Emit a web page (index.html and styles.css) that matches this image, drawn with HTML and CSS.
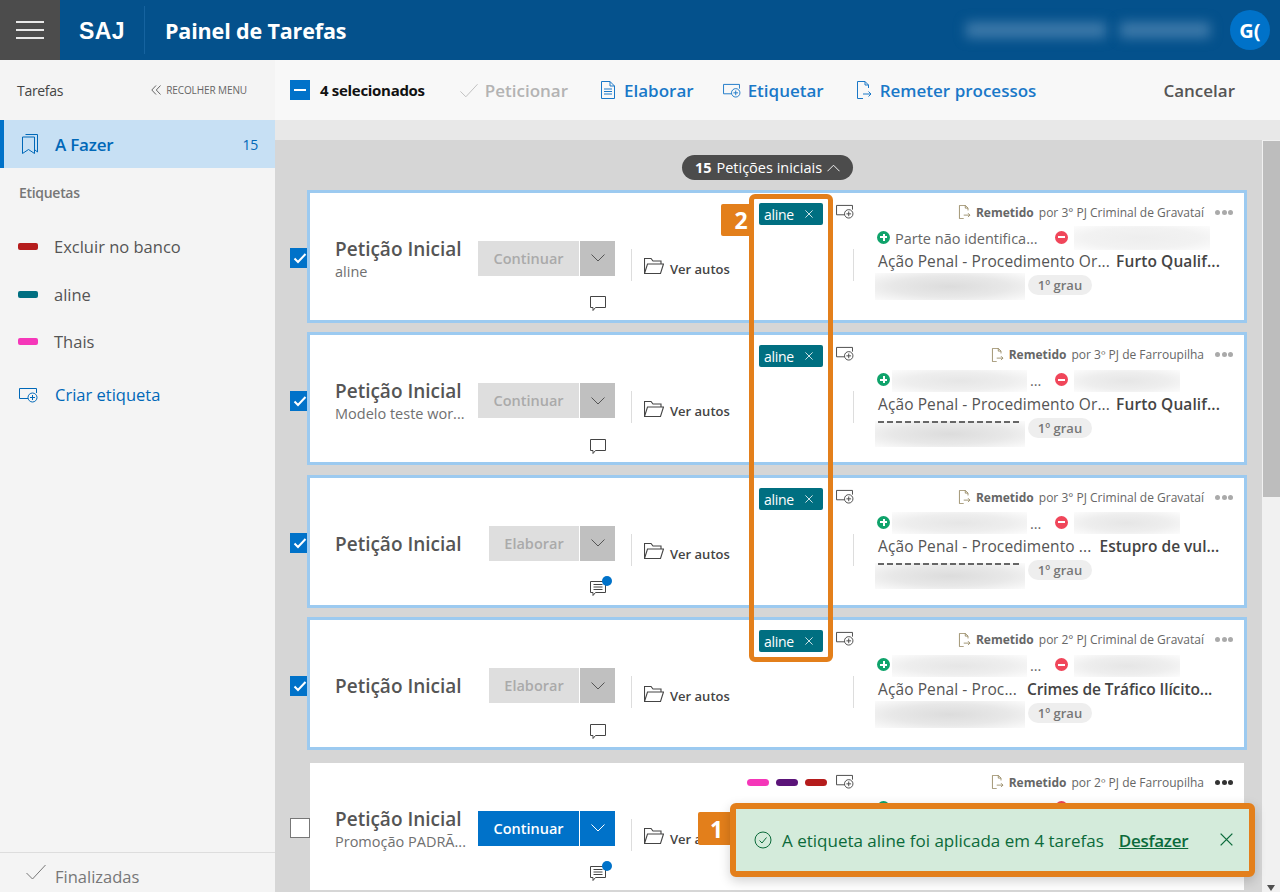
FILE: index.html
```html
<!DOCTYPE html>
<html lang="pt-BR">
<head>
<meta charset="utf-8">
<title>Painel de Tarefas</title>
<link rel="stylesheet" href="styles.css">
</head>
<body>
<svg class="defs" aria-hidden="true">
  <symbol id="i-label" viewBox="0 0 20 16"><path d="M10 11.500H1.500V1.500H18.500V6" fill="none" stroke="currentColor"/><circle cx="14.500" cy="10.500" r="4.500" fill="none" stroke="currentColor"/><path d="M14.500 8v5M12 10.500h5" stroke="currentColor"/></symbol>
  <symbol id="i-remit" viewBox="0 0 16 18"><path d="M9 .5H1.500V17.500H7M9 .5V4H12.500M9 .5L12.500 4V7" fill="none" stroke="currentColor"/><path d="M7 13H15M12.500 10.500L15 13L12.500 15.500" fill="none" stroke="currentColor"/></symbol>
  <symbol id="i-chat" viewBox="0 0 16 16"><path d="M.5 .5H15.500V11.500H5.500L3 14.500V11.500H.5Z" fill="none" stroke="currentColor"/></symbol>
  <symbol id="i-chatn" viewBox="0 0 16 16"><path d="M.5 .5H15.500V11.500H5.500L3 14.500V11.500H.5Z" fill="none" stroke="currentColor"/><path d="M3.500 3.500H12.500M3.500 6H12.500M3.500 8.500H12.500" stroke="currentColor"/></symbol>
  <symbol id="i-folder" viewBox="0 0 20 16"><path d="M.5 15.500V.5H7L9 3H17V6M.5 15.500H16.500L19.500 6H3.500L.5 15.500Z" fill="none" stroke="currentColor" stroke-width="1.100"/></symbol>
  <symbol id="i-down" viewBox="0 0 14 8"><path d="M.5 .5L7 7L13.500 .5" fill="none" stroke="currentColor"/></symbol>
  <symbol id="i-check" viewBox="0 0 20 16"><path d="M.5 9L6.500 15L19.500 1" fill="none" stroke="currentColor"/></symbol>
  <symbol id="i-tick" viewBox="0 0 14 12"><path d="M1.500 6.500L5 10L12.500 2" fill="none" stroke="currentColor" stroke-width="2"/></symbol>
  <symbol id="i-x" viewBox="0 0 10 10"><path d="M.5 .5L9.500 9.500M9.500 .5L.5 9.500" stroke="currentColor"/></symbol>
</svg>
<header class="topbar">
  <button class="burger" aria-label="Menu"><span></span><span></span><span></span></button>
  <span class="brand">SAJ</span>
  <span class="apptitle">Painel de Tarefas</span>
  <div class="userinfo"><span class="blurlight b1"></span><span class="blurlight b2"></span></div>
  <span class="avatar">G(</span>
</header>
<div class="shell">
  <aside class="sidebar">
    <div class="sidehead"><span>Tarefas</span><span class="collapse"><svg class="dbl" viewBox="0 0 10 10"><path d="M5 .5L.8 5L5 9.500M9.500 .5L5.300 5L9.500 9.500" fill="none" stroke="currentColor"/></svg>RECOLHER MENU</span></div>
    <div class="active-item">
      <svg class="bookmark" viewBox="0 0 16 20"><path d="M3.500 .5H15.500V18L13 16M.5 3H12.500V19.500L6.500 15.500L.5 19.500Z" fill="none" stroke="currentColor"/></svg>
      <span class="active-name">A Fazer</span><span class="count">15</span>
    </div>
    <div class="sidesection">Etiquetas</div>
    <ul class="labels">
      <li><i class="sw red"></i>Excluir no banco</li>
      <li><i class="sw teal"></i>aline</li>
      <li><i class="sw pink"></i>Thais</li>
    </ul>
    <div class="create"><svg class="ic-create"><use href="#i-label"/></svg>Criar etiqueta</div>
    <div class="finished"><svg class="ic-fin"><use href="#i-check"/></svg>Finalizadas</div>
  </aside>
  <main class="main">
    <div class="toolbar">
      <span class="cb cb-mixed"><i></i></span>
      <span class="selcount">4 selecionados</span>
      <span class="tool t-pet off"><svg class="ic-t18"><use href="#i-check"/></svg>Peticionar</span>
      <span class="tool t-ela"><svg class="ic-doc" viewBox="0 0 14 18"><path d="M9 .5H.5V17.500H13.500V5ZM9 .5V5H13.500M3 8H11M3 10.500H11M3 13H11" fill="none" stroke="currentColor"/></svg>Elaborar</span>
      <span class="tool t-eti"><svg class="ic-tl"><use href="#i-label"/></svg>Etiquetar</span>
      <span class="tool"><svg class="ic-tr"><use href="#i-remit"/></svg>Remeter processos</span>
      <span class="tool cancel">Cancelar</span>
    </div>
    <div class="strip"></div>
    <div class="content">
      <div class="list">
        <div class="groupwrap"><span class="group"><b>15</b> Petições iniciais <svg class="ic-up" viewBox="0 0 14 8"><path d="M.5 7.500L7 1L13.500 7.500" fill="none" stroke="currentColor"/></svg></span></div>

        <div class="row">
          <span class="cb cb-on"><svg><use href="#i-tick"/></svg></span>
          <article class="card sel">
            <div class="left">
              <div class="lead"><div class="info"><div class="t">Petição Inicial</div><div class="s">aline</div></div>
                <div class="split off"><span class="go">Continuar</span><span class="car"><svg><use href="#i-down"/></svg></span></div></div>
              <div class="note"><svg class="ic-chat"><use href="#i-chat"/></svg></div>
            </div>
            <div class="vr"></div>
            <div class="autos"><svg class="ic-folder"><use href="#i-folder"/></svg>Ver autos</div>
            <div class="tags"><span class="tag">aline <svg><use href="#i-x"/></svg></span></div>
            <svg class="ic-add"><use href="#i-label"/></svg>
            <div class="vr vr2"></div>
            <div class="detail">
              <div class="rem"><svg class="ic-rem"><use href="#i-remit"/></svg><b>Remetido</b> por 3° PJ Criminal de Gravataí<span class="dots"><i></i><i></i><i></i></span></div>
              <div class="party"><i class="plus"></i><span class="pname">Parte não identifica...</span><i class="minus"></i><span class="bl bl-a"></span></div>
              <div class="act">Ação Penal - Procedimento Or... <b>Furto Qualif...</b></div>
              <div class="proc"><span class="bl-p"></span><span class="grau">1º grau</span></div>
            </div>
          </article>
        </div>

        <div class="row">
          <span class="cb cb-on"><svg><use href="#i-tick"/></svg></span>
          <article class="card sel">
            <div class="left">
              <div class="lead"><div class="info"><div class="t">Petição Inicial</div><div class="s">Modelo teste wor...</div></div>
                <div class="split off"><span class="go">Continuar</span><span class="car"><svg><use href="#i-down"/></svg></span></div></div>
              <div class="note"><svg class="ic-chat"><use href="#i-chat"/></svg></div>
            </div>
            <div class="vr"></div>
            <div class="autos"><svg class="ic-folder"><use href="#i-folder"/></svg>Ver autos</div>
            <div class="tags"><span class="tag">aline <svg><use href="#i-x"/></svg></span></div>
            <svg class="ic-add"><use href="#i-label"/></svg>
            <div class="vr vr2"></div>
            <div class="detail">
              <div class="rem"><svg class="ic-rem"><use href="#i-remit"/></svg><b>Remetido</b> por 3º PJ de Farroupilha<span class="dots"><i></i><i></i><i></i></span></div>
              <div class="party"><i class="plus"></i><span class="pname"><span class="bl bl-n"></span>...</span><i class="minus"></i><span class="bl bl-b"></span></div>
              <div class="act">Ação Penal - Procedimento Or... <b>Furto Qualif...</b></div>
              <div class="proc"><span class="bl-p peek"></span><span class="grau">1º grau</span></div>
            </div>
          </article>
        </div>

        <div class="row">
          <span class="cb cb-on"><svg><use href="#i-tick"/></svg></span>
          <article class="card sel">
            <div class="left">
              <div class="lead"><div class="info"><div class="t">Petição Inicial</div></div>
                <div class="split off"><span class="go go-e">Elaborar</span><span class="car"><svg><use href="#i-down"/></svg></span></div></div>
              <div class="note"><svg class="ic-chat"><use href="#i-chatn"/></svg><i class="ping"></i></div>
            </div>
            <div class="vr"></div>
            <div class="autos"><svg class="ic-folder"><use href="#i-folder"/></svg>Ver autos</div>
            <div class="tags"><span class="tag">aline <svg><use href="#i-x"/></svg></span></div>
            <svg class="ic-add"><use href="#i-label"/></svg>
            <div class="vr vr2"></div>
            <div class="detail">
              <div class="rem"><svg class="ic-rem"><use href="#i-remit"/></svg><b>Remetido</b> por 3° PJ Criminal de Gravataí<span class="dots"><i></i><i></i><i></i></span></div>
              <div class="party"><i class="plus"></i><span class="pname"><span class="bl bl-n"></span>...</span><i class="minus"></i><span class="bl bl-b"></span></div>
              <div class="act">Ação Penal - Procedimento ... <b class="wide">Estupro de vul...</b></div>
              <div class="proc"><span class="bl-p peek"></span><span class="grau">1º grau</span></div>
            </div>
          </article>
        </div>

        <div class="row">
          <span class="cb cb-on"><svg><use href="#i-tick"/></svg></span>
          <article class="card sel">
            <div class="left">
              <div class="lead"><div class="info"><div class="t">Petição Inicial</div></div>
                <div class="split off"><span class="go go-e">Elaborar</span><span class="car"><svg><use href="#i-down"/></svg></span></div></div>
              <div class="note"><svg class="ic-chat"><use href="#i-chat"/></svg></div>
            </div>
            <div class="vr"></div>
            <div class="autos"><svg class="ic-folder"><use href="#i-folder"/></svg>Ver autos</div>
            <div class="tags"><span class="tag">aline <svg><use href="#i-x"/></svg></span></div>
            <svg class="ic-add"><use href="#i-label"/></svg>
            <div class="vr vr2"></div>
            <div class="detail">
              <div class="rem"><svg class="ic-rem"><use href="#i-remit"/></svg><b>Remetido</b> por 2° PJ Criminal de Gravataí<span class="dots"><i></i><i></i><i></i></span></div>
              <div class="party"><i class="plus"></i><span class="pname"><span class="bl bl-n"></span>...</span><i class="minus"></i><span class="bl bl-b"></span></div>
              <div class="act">Ação Penal - Proc... <b class="wider">Crimes de Tráfico Ilícito...</b></div>
              <div class="proc"><span class="bl-p"></span><span class="grau">1º grau</span></div>
            </div>
          </article>
        </div>

        <div class="row">
          <span class="cb"></span>
          <article class="card">
            <div class="left">
              <div class="lead"><div class="info"><div class="t">Petição Inicial</div><div class="s">Promoção PADRÃ...</div></div>
                <div class="split"><span class="go">Continuar</span><span class="car"><svg><use href="#i-down"/></svg></span></div></div>
              <div class="note"><svg class="ic-chat"><use href="#i-chatn"/></svg><i class="ping"></i></div>
            </div>
            <div class="vr"></div>
            <div class="autos"><svg class="ic-folder"><use href="#i-folder"/></svg>Ver autos</div>
            <div class="tags tags-mini"><i class="mini pink"></i><i class="mini purple"></i><i class="mini red"></i></div>
            <svg class="ic-add"><use href="#i-label"/></svg>
            <div class="vr vr2"></div>
            <div class="detail">
              <div class="rem"><svg class="ic-rem"><use href="#i-remit"/></svg><b>Remetido</b> por 2º PJ de Farroupilha<span class="dots dark"><i></i><i></i><i></i></span></div>
              <div class="party"><i class="plus"></i><span class="pname">Parte não identifica...</span><i class="minus"></i><span class="pname">333.510.151-00</span></div>
            </div>
          </article>
        </div>
      </div>
      <div class="scrollbar"><i class="arr up"></i><div class="thumb"></div><i class="arr dn"></i></div>
    </div>
  </main>
</div>

<div class="badge badge2">2</div>
<div class="frame"></div>
<div class="badge badge1">1</div>
<div class="toast">
  <svg class="ic-ok" viewBox="0 0 18 18"><circle cx="9" cy="9" r="8" fill="none" stroke="currentColor"/><path d="M5.500 9.500L8 12L12.500 6.500" fill="none" stroke="currentColor"/></svg>
  <span class="msg">A etiqueta aline foi aplicada em 4 tarefas</span>
  <a class="undo">Desfazer</a>
  <svg class="ic-close"><use href="#i-x"/></svg>
</div>
</body>
</html>
```
FILE: styles.css
```css
* { box-sizing: border-box; }
html, body { margin: 0; height: 892px; overflow: hidden; }
body { font-family: "Open Sans", "Noto Sans", "Liberation Sans", sans-serif; color: #555; display: flex; flex-direction: column; position: relative; }
.defs { display: none; }
svg { display: block; flex: none; }

.topbar { height: 60px; flex: none; background: #04518c; display: flex; align-items: center; color: #fff; }
.burger { width: 60px; height: 60px; background: #4c4c4c; border: 0; padding: 0; display: flex; flex-direction: column; align-items: center; justify-content: center; gap: 6px; }
.burger span { width: 28px; height: 2px; background: #e8e8e8; }
.brand { font-family: "Liberation Sans", sans-serif; font-size: 23px; font-weight: 700; margin-left: 19px; width: 66px; height: 48px; line-height: 50px; border-right: 1px solid #16639f; letter-spacing: .4px; }
.apptitle { font-size: 21.500px; font-weight: 700; margin-left: 20px; letter-spacing: -.15px; }
.userinfo { margin-left: auto; display: flex; gap: 14px; margin-right: 20px; }
.blurlight { height: 16px; background: #3d79a9; filter: blur(6px); display: block; }
.b1 { width: 140px; }
.b2 { width: 90px; }
.avatar { width: 40px; height: 40px; border-radius: 50%; background: #0072c9; font-size: 20px; font-weight: 700; display: flex; align-items: center; justify-content: center; margin-right: 10px; }

.shell { flex: 1; display: flex; min-height: 0; }
.sidebar { width: 275px; flex: none; background: #f4f4f4; display: flex; flex-direction: column; color: #666; }
.sidehead { height: 60px; display: flex; align-items: center; justify-content: space-between; padding: 0 28px 0 17px; font-size: 14px; color: #444; letter-spacing: -.3px; }
.collapse { display: flex; align-items: center; font-size: 10px; color: #666; letter-spacing: -.1px; }
.dbl { width: 10px; height: 10px; margin-right: 5px; }
.active-item { height: 48px; background: #c7e0f4; border-left: 4px solid #0072c9; display: flex; align-items: center; color: #0068b8; }
.bookmark { width: 16px; height: 20px; margin-left: 18px; }
.active-name { font-size: 17px; font-weight: 600; margin-left: 17px; letter-spacing: -.2px; }
.count { margin-left: auto; margin-right: 17px; font-size: 14px; letter-spacing: -.3px; }
.sidesection { font-size: 14px; font-weight: 600; color: #777; margin: 15px 0 0 19px; line-height: 20px; letter-spacing: -.3px; }
.labels { list-style: none; margin: 20px 0 0; padding: 0; }
.labels li { height: 47.500px; display: flex; align-items: center; font-size: 16.500px; color: #555; padding-left: 18px; }
.sw { width: 20px; height: 7px; border-radius: 2px; margin-right: 16px; }
.red { background: #b51c1c; }
.teal { background: #006f81; }
.pink { background: #f537b9; }
.purple { background: #5b1479; }
.create { display: flex; align-items: center; font-size: 16.500px; color: #0068b8; margin-left: 18px; margin-top: 5px; height: 48px; }
.ic-create { width: 20px; height: 16px; margin-right: 17px; }
.finished { margin-top: auto; border-top: 1px solid #ddd; height: 40px; display: flex; align-items: center; padding: 8px 0 0 26px; font-size: 16.500px; color: #777; }
.ic-fin { width: 20px; height: 16px; margin-right: 9px; margin-top: -10px; }

.main { flex: 1; min-width: 0; display: flex; flex-direction: column; background: #d6d6d6; }
.toolbar { height: 60px; flex: none; background: #f8f8f8; display: flex; align-items: center; padding-left: 15px; padding-right: 45px; font-size: 17px; font-weight: 600; color: #1a78c8; }
.selcount { font-size: 15px; font-weight: 700; color: #111; margin: 0 35px 0 10px; letter-spacing: -.3px; }
.tool { display: flex; align-items: center; margin-right: 31px; }
.t-pet { margin-right: 33px; }
.t-ela { margin-right: 28px; }
.t-eti { margin-right: 32px; }
.off { color: #b3b3b3; }
.cancel { margin-left: auto; margin-right: 0; color: #555; }
.ic-t18 { width: 18px; height: 15px; margin-right: 7px; color: #bbb; }
.ic-doc { width: 14px; height: 18px; margin-right: 9px; }
.ic-tl { width: 19px; height: 15px; margin-right: 7px; }
.ic-tr { width: 16px; height: 18px; margin-right: 8px; }
.strip { height: 20px; flex: none; background: #e8e8e8; }

.content { flex: 1; min-height: 0; display: flex; overflow: hidden; }
.list { flex: 1; min-width: 0; padding: 15px 15px 0; display: flex; flex-direction: column; gap: 9.500px; }
.groupwrap { height: 25px; display: flex; justify-content: center; margin-bottom: .400px; }
.group { height: 25px; border-radius: 13px; background: #4c4c4c; color: #fff; font-size: 14.500px; display: flex; align-items: center; gap: 5px; padding: 0 13px 0 13px; transform: translateX(-1px); }
.group b { font-weight: 700; }
.ic-up { width: 13px; height: 8px; }
.scrollbar { width: 18px; flex: none; background: #f1f1f1; display: flex; flex-direction: column; align-items: center; position: relative; margin-top: -20px; padding-top: 21px; }
.thumb { width: 17px; height: 356px; background: #bdbdbd; }
.arr { position: absolute; width: 0; height: 0; border-left: 4.500px solid transparent; border-right: 4.500px solid transparent; }
.arr.up { top: 9px; border-bottom: 6px solid #a3a3a3; }
.arr.dn { bottom: 1px; border-top: 6px solid #505050; }

.row { display: flex; flex: none; align-items: flex-start; }
.cb { width: 20px; height: 20px; flex: none; background: #fff; border: 1.500px solid #777; display: flex; align-items: center; justify-content: center; }
.row .cb { margin-top: 58.300px; margin-right: -3px; }
.cb-mixed { background: #0072c9; border: 0; }
.cb-mixed i { width: 12px; height: 2.500px; background: #fff; }
.cb-on { background: #0072c9; border: 0; color: #fff; }
.cb-on svg { width: 14px; height: 12px; }
.card { position: relative; flex: 1; height: 133px; background: #fff; background-clip: padding-box; border: 3px solid transparent; display: flex; align-items: flex-start; }
.card.sel { border-color: #9ccaf0; }

.left { width: 305px; flex: none; padding: 48px 0 0 25px; }
.lead { display: flex; justify-content: space-between; align-items: center; height: 35px; }
.t { font-size: 19px; font-weight: 600; color: #555; line-height: 25px; white-space: nowrap; }
.t:only-child { padding-top: 2px; }
.s { font-size: 14.500px; line-height: 18px; margin: 1px 0 -1px; color: #707070; white-space: nowrap; }
.split { display: flex; gap: 1px; color: #fff; font-size: 14.500px; font-weight: 600; }
.go { height: 35px; width: 101px; background: #0072c9; display: flex; align-items: center; justify-content: center; }
.go-e { width: 90px; }
.car { height: 35px; width: 35px; background: #0072c9; display: flex; align-items: center; justify-content: center; }
.car svg { width: 14px; height: 8px; }
.split.off .go { background: #dedede; color: #aaa; }
.split.off .car { background: #c0c0c0; color: #555; }
.note { margin: 20.300px 0 0 255px; width: 16px; height: 16px; position: relative; color: #444; }
.ic-chat { width: 16px; height: 16px; }
.ping { position: absolute; top: -5px; right: -6px; width: 10px; height: 10px; border-radius: 50%; background: #0072c9; }
.vr { width: 1px; height: 32px; background: #ddd; margin: 56px 0 0 16px; flex: none; }
.autos { width: 113px; flex: none; padding-left: 12px; margin-top: 67px; display: flex; align-items: center; font-size: 13px; font-weight: 600; color: #444; gap: 6px; }
.ic-folder { width: 20px; height: 16px; margin-top: -5px; }
.tags { width: 78px; flex: none; margin-top: 10px; display: flex; justify-content: flex-end; gap: 7px; }
.tag { width: 64px; height: 22px; background: #006f81; border-radius: 2px; color: #fff; font-size: 14px; display: flex; align-items: center; justify-content: space-between; padding: 1px 10px 0 5px; letter-spacing: -.3px; }
.tag svg { width: 8px; height: 8px; margin-top: -1px; }
.tags-mini { width: 82px; margin-top: 16px; padding-left: 1px; }
.mini { width: 22px; height: 7px; border-radius: 4px; }
.ic-add { width: 19px; height: 15px; margin: 11px 0 0 12px; color: #444; }
.tags-mini + .ic-add { margin-left: 8px; }
.vr2 { margin-left: -1px; }
.detail { margin-left: 24px; width: 357px; flex: none; padding: 9.300px 2px 0 0; font-size: 14px; }
.rem { height: 20px; display: flex; align-items: center; justify-content: flex-end; font-size: 12px; color: #666; white-space: pre; }
.rem b { font-weight: 700; color: #666; margin-right: 2px; }
.ic-rem { width: 13px; height: 14px; margin-right: 5px; color: #8a7a50; }
.dots { display: flex; gap: 1.500px; margin-left: 11px; }
.dots i { width: 5px; height: 5px; border-radius: 50%; background: #aaa; }
.dots.dark i { background: #333; }
.party { display: flex; align-items: center; height: 24px; margin-top: 4px; white-space: nowrap; }
.plus, .minus { width: 13px; height: 13px; margin-top: -2px; border-radius: 50%; flex: none; position: relative; background: #0fa36b; }
.plus { margin-left: -1px; }
.minus { background: #f0465a; }
.plus::before, .minus::before { content: ""; position: absolute; left: 3px; right: 3px; top: 5.500px; height: 2px; background: #fff; }
.plus::after { content: ""; position: absolute; top: 3px; bottom: 3px; left: 5.500px; width: 2px; background: #fff; }
.pname { color: #666; margin-left: 5px; width: 160px; font-size: 14.500px; display: flex; align-items: center; }
.pname:last-child { width: auto; }
.bl { display: block; flex: none; background: radial-gradient(ellipse at center, #e6e6e6 0%, #eeeeee 55%, #fcfcfc 100%); }
.bl-a { width: 136px; height: 24px; margin-left: 6px; background: radial-gradient(ellipse at center, #eeeeee 0%, #f2f2f2 60%, #fcfcfc 100%); }
.bl-n { width: 135px; height: 22px; margin: 0 3px 0 -3px; }
.bl-b { width: 106px; height: 22px; margin-left: 6px; }
.act { font-size: 15.500px; line-height: 22px; color: #555; white-space: nowrap; letter-spacing: .1px; }
.act b { font-weight: 600; color: #444; margin-left: 2px; }
.act b.wide { margin-left: 4px; letter-spacing: 0; }
.act b.wider { margin-left: 6px; letter-spacing: -.1px; }
.proc { display: flex; align-items: flex-start; margin-top: 3px; height: 20px; }
.bl-p { position: relative; display: block; overflow: hidden; width: 150px; height: 27px; margin: -2px 3px 0 -3px; flex: none; background: radial-gradient(ellipse at center, #dcdcdc 0%, #e8e8e8 55%, #fbfbfb 100%); }
.bl-p.peek { margin-top: 3px; height: 26px; }
.bl-p.peek::before { content: ""; position: absolute; left: 3px; top: 0; width: 142px; height: 2px; background: repeating-linear-gradient(90deg, #666 0 6px, transparent 6px 9px); }
.grau { width: 64px; height: 20px; border-radius: 10px; background: #eee; font-size: 13px; font-weight: 600; color: #777; display: flex; align-items: center; justify-content: center; }

.frame { position: absolute; left: 749px; top: 194px; width: 84px; height: 468px; border: 5px solid #e37f1b; border-radius: 6px; }
.badge { position: absolute; background: #e37f1b; color: #fff; font-size: 23px; font-weight: 700; display: flex; align-items: center; justify-content: center; border-radius: 2px; }
.badge2 { left: 721px; top: 204px; width: 30px; height: 32px; padding-left: 10px; }
.badge1 { left: 698px; top: 812px; width: 37px; height: 33px; }
.toast { position: absolute; left: 730px; top: 803px; width: 525px; height: 74px; background: #d4ebdb; border: 6px solid #e37f1b; border-radius: 6px; display: flex; align-items: center; color: #0b6a3a; font-size: 17px; padding-left: 18px; box-shadow: 0 4px 12px rgba(0,0,0,.18); }
.ic-ok { width: 18px; height: 18px; margin-right: 10px; }
.msg { white-space: nowrap; }
.undo { margin-left: 15px; font-weight: 600; text-decoration: underline; letter-spacing: -.3px; }
.ic-close { width: 13px; height: 13px; margin-left: auto; margin-right: 16px; margin-top: -1px; }
```
